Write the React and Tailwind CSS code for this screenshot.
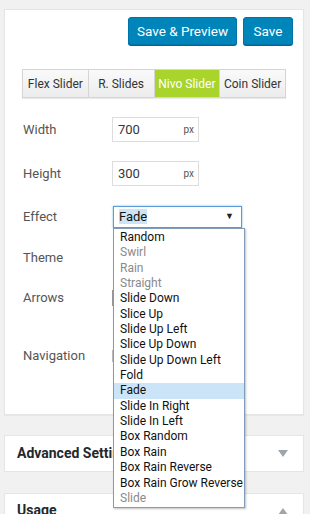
import React from "react";

const effects = [
  ["Random", true],
  ["Swirl", false],
  ["Rain", false],
  ["Straight", false],
  ["Slide Down", true],
  ["Slice Up", true],
  ["Slide Up Left", true],
  ["Slice Up Down", true],
  ["Slide Up Down Left", true],
  ["Fold", true],
  ["Fade", true],
  ["Slide In Right", true],
  ["Slide In Left", true],
  ["Box Random", true],
  ["Box Rain", true],
  ["Box Rain Reverse", true],
  ["Box Rain Grow Reverse", true],
  ["Slide", false],
];

const tabs = ["Flex Slider", "R. Slides", "Nivo Slider", "Coin Slider"];

function Tri({ up }) {
  return (
    <svg width="10" height="7" viewBox="0 0 10 7" className="text-[#a0a5aa]">
      {up ? <path d="M0 7 L5 0 L10 7 Z" fill="currentColor" /> : <path d="M0 0 L10 0 L5 7 Z" fill="currentColor" />}
    </svg>
  );
}

function PxInput({ value }) {
  return (
    <div className="flex items-center w-[87px] h-[25px] border border-[#dddddd] bg-white pl-[5px] pr-[4px]">
      <span className="flex-1 text-[13px] text-[#32373c]">{value}</span>
      <span className="text-[10px] text-[#555]">px</span>
    </div>
  );
}

export default function App() {
  return (
    <div className="min-h-[514px] bg-[#f1f1f1] pt-[9px] pl-[4px] overflow-hidden" style={{ fontFamily: "Roboto, 'Liberation Sans', sans-serif" }}>
      <div className="w-[300px] bg-white border border-[#e5e5e5] shadow-[0_1px_1px_rgba(0,0,0,0.04)] h-[406px]">
        <div className="flex justify-end gap-[6px] pt-[7px] pr-[10px]">
          <button className="h-[28px] w-[109px] rounded-[3px] bg-[#0085ba] border border-[#0073aa] shadow-[0_1px_0_#006799] text-white text-[13.5px]">Save &amp; Preview</button>
          <button className="h-[28px] w-[50px] rounded-[3px] bg-[#0085ba] border border-[#0073aa] shadow-[0_1px_0_#006799] text-white text-[13.5px]">Save</button>
        </div>
        <div className="flex ml-[17px] mt-[24px] w-[264px] h-[29px] border border-[#d5d5d5] shadow-[0_1px_1px_rgba(0,0,0,0.08)]">
          {tabs.map((t, i) => (
            <div
              key={t}
              className={
                "flex-1 flex items-center justify-center text-[12px] " +
                (i > 0 ? "border-l border-[#d5d5d5] " : "") +
                (i === 2 ? "bg-[#a8d42c] text-white" : "bg-gradient-to-b from-[#fafafa] to-[#ececec] text-[#333]")
              }
            >
              {t}
            </div>
          ))}
        </div>
        <div className="flex flex-col mt-[19px] pl-[18px] text-[13px] text-[#555]">
          <div className="flex items-center h-[25px]">
            <span className="w-[89px]">Width</span>
            <PxInput value="700" />
          </div>
          <div className="flex items-center h-[25px] mt-[19px]">
            <span className="w-[89px]">Height</span>
            <PxInput value="300" />
          </div>
          <div className="flex items-center h-[22px] mt-[20px]">
            <span className="w-[90px]">Effect</span>
            <div className="relative">
              <div className="flex items-center w-[129px] h-[22px] border border-[#5b9dd9] shadow-[0_0_2px_rgba(30,140,190,0.6)] bg-white pl-[5px] pr-[7px]">
                <span className="flex-1"><span className="bg-[#cce4f7] text-[#111]">Fade</span></span>
                <span className="text-[9px] text-[#222]">▼</span>
              </div>
              <div className="absolute left-0 top-[22px] w-[132px] bg-white border border-[#7f9db9] shadow-[1px_1px_2px_rgba(0,0,0,0.25)] z-10 py-[1px]">
                {effects.map(([name, on]) => (
                  <div
                    key={name}
                    className={
                      "h-[15.35px] leading-[15.35px] pl-[6px] whitespace-nowrap text-[12px] " +
                      (name === "Fade" ? "bg-[#cce4f7] " : "") +
                      (on ? "text-[#111]" : "text-[#8a8a8a]")
                    }
                  >
                    {name}
                  </div>
                ))}
              </div>
            </div>
          </div>
          <div className="flex items-center h-[22px] mt-[19px]">
            <span className="w-[89px]">Theme</span>
          </div>
          <div className="flex items-center h-[22px] mt-[18px]">
            <span className="w-[89px]">Arrows</span>
            <div className="w-[40px] h-[16px] border-l-2 border-[#999]" />
          </div>
          <div className="flex items-center h-[22px] mt-[36px]">
            <span className="w-[89px]">Navigation</span>
            <div className="w-[40px] h-[12px] border-l-2 border-[#bbb]" />
          </div>
        </div>
      </div>
      <div className="mt-[20px] w-[300px] h-[37px] bg-white border border-[#e5e5e5] flex items-center justify-between pl-[12px] pr-[15px]">
        <span className="text-[14px] font-bold text-[#23282d]">Advanced Settings</span>
        <Tri />
      </div>
      <div className="mt-[21px] w-[300px] h-[37px] bg-white border border-[#e5e5e5] flex items-start justify-between pt-[7px] pl-[12px] pr-[15px]">
        <span className="text-[14px] leading-[18px] font-bold text-[#23282d]">Usage</span>
        <span className="pt-[7px]"><Tri up /></span>
      </div>
    </div>
  );
}
